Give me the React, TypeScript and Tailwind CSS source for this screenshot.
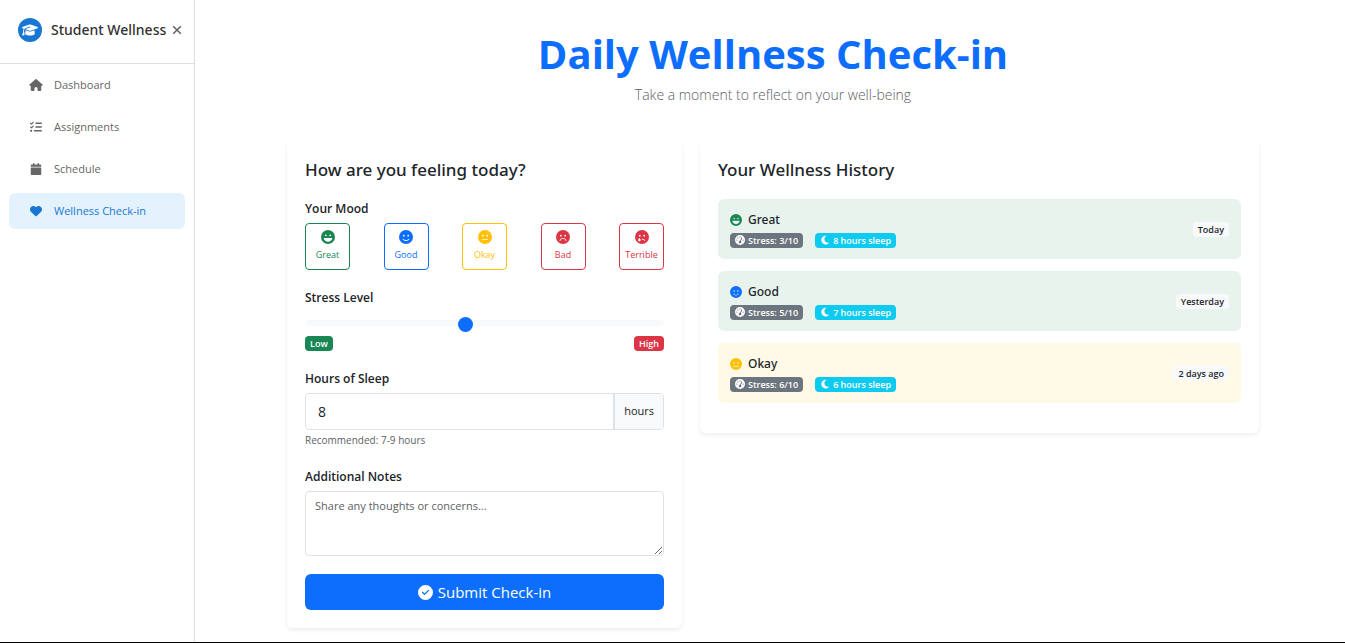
import { useState } from "react";
import type { ReactNode } from "react";
import type { IconType } from "react-icons";
import {
  FaCalendar,
  FaCircleCheck,
  FaFaceFrown,
  FaFaceLaugh,
  FaFaceMeh,
  FaFaceSadTear,
  FaFaceSmile,
  FaGaugeHigh,
  FaGraduationCap,
  FaHeart,
  FaHouse,
  FaListCheck,
  FaMoon,
} from "react-icons/fa6";

type NavItem = { label: string; icon: IconType; active?: boolean };

const navItems: NavItem[] = [
  { label: "Dashboard", icon: FaHouse },
  { label: "Assignments", icon: FaListCheck },
  { label: "Schedule", icon: FaCalendar },
  { label: "Wellness Check-in", icon: FaHeart, active: true },
];

const moods: { label: string; icon: IconType; tone: string }[] = [
  { label: "Great", icon: FaFaceLaugh, tone: "border-[#198754] text-[#198754]" },
  { label: "Good", icon: FaFaceSmile, tone: "border-[#0d6efd] text-[#0d6efd]" },
  { label: "Okay", icon: FaFaceMeh, tone: "border-[#ffc107] text-[#ffc107]" },
  { label: "Bad", icon: FaFaceFrown, tone: "border-[#dc3545] text-[#dc3545]" },
  { label: "Terrible", icon: FaFaceSadTear, tone: "border-[#dc3545] text-[#dc3545]" },
];

const history = [
  { mood: "Great", icon: FaFaceLaugh, color: "text-[#198754]", bg: "bg-[#e8f3ee]", stress: 3, sleep: 8, when: "Today" },
  { mood: "Good", icon: FaFaceSmile, color: "text-[#0d6efd]", bg: "bg-[#e8f3ee]", stress: 5, sleep: 7, when: "Yesterday" },
  { mood: "Okay", icon: FaFaceMeh, color: "text-[#ffc107]", bg: "bg-[#fff9e6]", stress: 6, sleep: 6, when: "2 days ago" },
];

function Badge({ tone, children }: { tone: string; children: ReactNode }) {
  return (
    <span className={`inline-flex h-[15px] items-center gap-[3px] rounded px-[5px] text-[9px] leading-none font-semibold whitespace-nowrap ${tone}`}>
      {children}
    </span>
  );
}

function Card({ title, children }: { title: string; children: ReactNode }) {
  return (
    <section className="rounded-md bg-white px-[18px] pt-[17px] pb-[18px] shadow-[0_2px_4px_rgba(0,0,0,0.075)]">
      <h2 className="font-['Noto_Sans','Open_Sans',sans-serif] text-[17px] leading-6 font-medium">{title}</h2>
      {children}
    </section>
  );
}

function Sidebar() {
  return (
    <aside className="w-[195px] shrink-0 border-r border-[#dedede]">
      <div className="flex h-16 items-center border-b border-[#dedede] pr-3 pb-1 pl-[18px]">
        <span className="flex size-6 shrink-0 items-center justify-center rounded-full bg-[#1976d2] text-white">
          <FaGraduationCap className="size-4" />
        </span>
        <span className="ml-[9px] font-['Noto_Sans','Open_Sans',sans-serif] text-sm font-medium whitespace-nowrap text-[#333]">Student Wellness</span>
        <button type="button" aria-label="Close menu" className="ml-auto text-[#666]">
          <svg viewBox="0 0 10 10" className="size-2.5" fill="none" stroke="currentColor" strokeWidth="1.6">
            <path d="M1.2 1.2l7.6 7.6M8.8 1.2L1.2 8.8" />
          </svg>
        </button>
      </div>
      <nav className="flex flex-col gap-1.5 px-[9px] pt-[3px]">
        {navItems.map(({ label, icon: Icon, active }) => (
          <a
            key={label}
            href="#"
            className={`flex h-9 items-center gap-[11px] rounded-md pl-5 text-[11px] ${active ? "bg-[#e3f2fd] text-[#1976d2]" : "text-[#666]"}`}
          >
            <Icon className="h-3 w-3.5" />
            {label}
          </a>
        ))}
      </nav>
    </aside>
  );
}

function CheckInForm() {
  const [stress, setStress] = useState(5);
  const [hours, setHours] = useState("8");
  const label = "block text-xs leading-[18px] font-semibold";
  return (
    <Card title="How are you feeling today?">
      <form className="mt-[18px]" onSubmit={(e) => e.preventDefault()}>
        <fieldset>
          <legend className={label}>Your Mood</legend>
          <div className="mt-[5px] flex justify-between">
            {moods.map(({ label: mood, icon: Icon, tone }) => (
              <button key={mood} type="button" className={`flex h-[47px] w-[45px] flex-col items-center gap-1 rounded border pt-1.5 text-[9px] leading-[14px] ${tone}`}>
                <Icon className="size-3.5" />
                {mood}
              </button>
            ))}
          </div>
        </fieldset>

        <label htmlFor="stress" className={`mt-[19px] ${label}`}>Stress Level</label>
        <input
          id="stress"
          type="range"
          min={1}
          max={10}
          value={stress}
          onChange={(e) => setStress(Number(e.target.value))}
          className="mt-1.5 block h-5 w-full cursor-pointer appearance-none bg-transparent [&::-webkit-slider-runnable-track]:h-1.5 [&::-webkit-slider-runnable-track]:rounded-full [&::-webkit-slider-runnable-track]:bg-[#f8f9fa] [&::-webkit-slider-thumb]:-mt-[3px] [&::-webkit-slider-thumb]:size-[15px] [&::-webkit-slider-thumb]:appearance-none [&::-webkit-slider-thumb]:rounded-full [&::-webkit-slider-thumb]:bg-[#0d6efd]"
        />
        <div className="mt-[3px] flex justify-between">
          <Badge tone="bg-[#198754] text-white">Low</Badge>
          <Badge tone="bg-[#dc3545] text-white">High</Badge>
        </div>

        <label htmlFor="hours" className={`mt-[19px] ${label}`}>Hours of Sleep</label>
        <div className="mt-[5px] flex h-[37px] overflow-hidden rounded border border-[#dee2e6]">
          <input
            id="hours"
            type="text"
            inputMode="numeric"
            value={hours}
            onChange={(e) => setHours(e.target.value)}
            className="min-w-0 flex-1 px-3 text-sm outline-none"
          />
          <span className="flex items-center border-l-2 border-[#dee2e6] bg-[#f8f9fa] px-[9px] text-[11px]">hours</span>
        </div>
        <p className="mt-0.5 text-[10px] leading-4 text-[#5c6166]">Recommended: 7-9 hours</p>

        <label htmlFor="notes" className={`mt-5 ${label}`}>Additional Notes</label>
        <textarea
          id="notes"
          placeholder="Share any thoughts or concerns..."
          className="mt-[5px] block h-[65px] w-full rounded border border-[#dee2e6] px-[9px] py-[5px] text-[11px] leading-[18px] outline-none placeholder:text-[#5c6166]"
        />

        <button type="submit" className="mt-[18px] flex h-9 w-full items-center justify-center gap-[5px] rounded-md bg-[#0d6efd] text-[15px] text-white">
          <FaCircleCheck className="size-[15px]" />
          Submit Check-in
        </button>
      </form>
    </Card>
  );
}

function History() {
  return (
    <Card title="Your Wellness History">
      <ul className="mt-[17px] mb-3 flex flex-col gap-3">
        {history.map(({ mood, icon: Icon, color, bg, stress, sleep, when }) => (
          <li key={mood} className={`flex h-[60px] items-center justify-between rounded-md px-3 ${bg}`}>
            <div>
              <h3 className="flex items-center gap-1.5 font-['Noto_Sans','Open_Sans',sans-serif] text-xs leading-[18px] font-medium">
                <Icon className={`size-3 ${color}`} />
                {mood}
              </h3>
              <div className="mt-1 flex gap-3">
                <Badge tone="bg-[#6c757d] text-white"><FaGaugeHigh className="size-2.5" />Stress: {stress}/10</Badge>
                <Badge tone="bg-[#0dcaf0] text-white"><FaMoon className="size-2.5" />{sleep} hours sleep</Badge>
              </div>
            </div>
            <Badge tone="bg-[#f8f9fa] text-[#212529]">{when}</Badge>
          </li>
        ))}
      </ul>
    </Card>
  );
}

export default function App() {
  return (
    <div className="flex min-h-screen border-b border-black bg-white font-['Open_Sans','Noto_Sans',sans-serif] text-[#212529]">
      <Sidebar />
      <main className="min-w-0 flex-1 pt-[30px] pr-6 pb-[13px] pl-[30px]">
        <div className="mx-auto max-w-[972px]">
          <header className="text-center">
            <h1 className="text-[40px] leading-[48px] font-bold text-[#0d6efd]">Daily Wellness Check-in</h1>
            <p className="mt-1.5 text-sm leading-[22px] font-light text-[#5c6166]">Take a moment to reflect on your well-being</p>
          </header>
          <div className="mt-[35px] grid grid-cols-1 items-start gap-[18px] md:grid-cols-[395fr_559fr]">
            <CheckInForm />
            <History />
          </div>
        </div>
      </main>
    </div>
  );
}
